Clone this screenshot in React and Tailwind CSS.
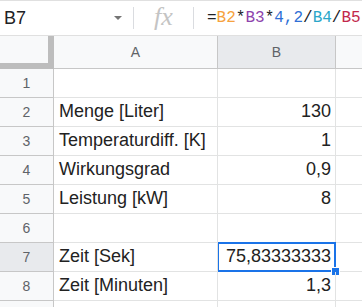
import React from 'react';

const ROWS = [
  { n: 1, label: '', value: '' },
  { n: 2, label: 'Menge [Liter]', value: '130' },
  { n: 3, label: 'Temperaturdiff. [K]', value: '1' },
  { n: 4, label: 'Wirkungsgrad', value: '0,9' },
  { n: 5, label: 'Leistung [kW]', value: '8' },
  { n: 6, label: '', value: '' },
  { n: 7, label: 'Zeit [Sek]', value: '75,83333333', selected: true },
  { n: 8, label: 'Zeit [Minuten]', value: '1,3' },
  { n: '', label: '', value: '' },
];

const Formula = () => (
  <div className="pl-[13px] text-[16px] whitespace-nowrap font-['Liberation_Mono',monospace] text-[#202124]">
    <span>=</span>
    <span className="text-[#f6a23e]">B2</span>
    <span>*</span>
    <span className="text-[#8e44ad]">B3</span>
    <span>*</span>
    <span className="text-[#2f6fd6]">4,2</span>
    <span>/</span>
    <span className="text-[#2aa6c9]">B4</span>
    <span>/</span>
    <span className="text-[#c2284c]">B5</span>
  </div>
);

const Row = ({ row }) => (
  <div className="flex h-[29px]">
    <div
      className={`w-[54px] shrink-0 flex items-center justify-center border-r border-b border-[#c7c7c7] text-[14px] text-[#5f6368] ${
        row.selected ? 'bg-[#e8eaed]' : 'bg-[#f8f9fa]'
      }`}
    >
      {row.n}
    </div>
    <div className="w-[164px] shrink-0 border-r border-b border-[#e2e3e3] flex items-end pb-[5px] pl-[5px] text-[18px] leading-[20px] text-[#222] whitespace-nowrap relative z-10">
      <span>{row.label}</span>
    </div>
    <div className="w-[118px] shrink-0 border-r border-b border-[#e2e3e3] flex items-end justify-end pb-[5px] pr-[4px] text-[18px] leading-[20px] text-[#222] relative">
      {row.value}
      {row.selected && (
        <>
          <span className="absolute -left-px -top-px -right-px -bottom-px border-2 border-[#1a73e8]" />
          <span className="absolute -right-[5px] -bottom-[5px] w-[7px] h-[7px] bg-[#1a73e8] border border-white box-content" />
        </>
      )}
    </div>
    <div className="flex-1 border-b border-[#e2e3e3]" />
  </div>
);

export default function App() {
  return (
    <div className="w-[362px] h-[307px] overflow-hidden bg-white font-['Liberation_Sans',Arial,sans-serif]">
      <div className="h-[36px] flex items-center border-t border-b border-[#e0e0e0]">
        <div className="w-[133px] shrink-0 flex items-center justify-between pl-[4px] pr-[11px]">
          <span className="text-[18px] text-[#202124]">B7</span>
          <svg width="8" height="4" viewBox="0 0 8 4">
            <path d="M0 0 L8 0 L4 4 Z" fill="#757575" />
          </svg>
        </div>
        <div className="w-px h-[22px] bg-[#dadce0] shrink-0" />
        <div className="w-[59px] shrink-0 flex items-center justify-center">
          <span className="text-[26px] italic text-[#c4c4c4] font-['Liberation_Serif',serif] leading-none pb-[2px]">fx</span>
        </div>
        <div className="w-px h-[22px] bg-[#dadce0] shrink-0" />
        <Formula />
      </div>
      <div className="flex h-[33px]">
        <div className="w-[54px] shrink-0 bg-[#f8f9fa] border-r-[6px] border-b-[6px] border-[#bdbdbd]" />
        <div className="w-[164px] shrink-0 bg-[#f8f9fa] border-r border-b border-[#c7c7c7] flex items-center justify-center text-[14px] text-[#5f6368]">
          A
        </div>
        <div className="w-[118px] shrink-0 bg-[#e8eaed] border-r border-b border-[#c7c7c7] flex items-center justify-center text-[14px] text-[#5f6368]">
          B
        </div>
        <div className="flex-1 bg-[#f8f9fa] border-b border-[#c7c7c7]" />
      </div>
      {ROWS.map((row, i) => (
        <Row key={i} row={row} />
      ))}
    </div>
  );
}
